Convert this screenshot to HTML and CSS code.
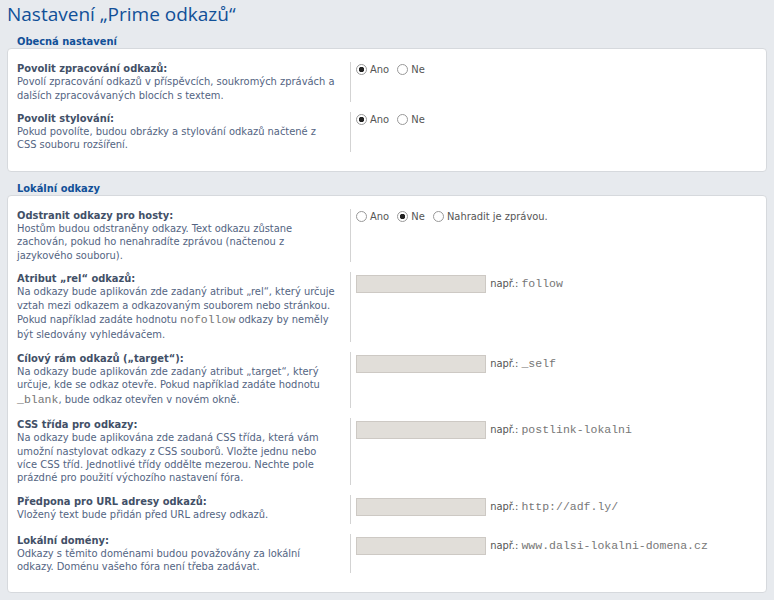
FILE: index.html
```html
<!DOCTYPE html>
<html lang="cs">
<head>
    <meta charset="UTF-8">
    <title>Nastavení „Prime odkazů“</title>
    <link rel="stylesheet" href="styles.css">
</head>
<body>
    <h1>Nastavení „Prime odkazů“</h1>

    <div class="fieldset">
        <div class="legend">Obecná nastavení</div>
        <div class="panel">
            <div class="row">
                <div class="dt">
                    <label>Povolit zpracování odkazů:</label>
                    <span>Povolí zpracování odkazů v příspěvcích, soukromých zprávách a dalších zpracovávaných blocích s textem.</span>
                </div>
                <div class="dd">
                    <label class="radio"><input type="radio" name="enable" checked> Ano</label>
                    <label class="radio"><input type="radio" name="enable"> Ne</label>
                </div>
            </div>
            <div class="row">
                <div class="dt">
                    <label>Povolit stylování:</label>
                    <span>Pokud povolíte, budou obrázky a stylování odkazů načtené z CSS souboru rozšíření.</span>
                </div>
                <div class="dd">
                    <label class="radio"><input type="radio" name="style" checked> Ano</label>
                    <label class="radio"><input type="radio" name="style"> Ne</label>
                </div>
            </div>
        </div>
    </div>

    <div class="fieldset">
        <div class="legend">Lokální odkazy</div>
        <div class="panel">
            <div class="row">
                <div class="dt">
                    <label>Odstranit odkazy pro hosty:</label>
                    <span>Hostům budou odstraněny odkazy. Text odkazu zůstane zachován, pokud ho nenahradíte zprávou (načtenou z jazykového souboru).</span>
                </div>
                <div class="dd">
                    <label class="radio"><input type="radio" name="guests"> Ano</label>
                    <label class="radio"><input type="radio" name="guests" checked> Ne</label>
                    <label class="radio"><input type="radio" name="guests"> Nahradit je zprávou.</label>
                </div>
            </div>
            <div class="row">
                <div class="dt">
                    <label>Atribut „rel“ odkazů:</label>
                    <span>Na odkazy bude aplikován zde zadaný atribut „rel“, který určuje vztah mezi odkazem a odkazovaným souborem nebo stránkou. Pokud například zadáte hodnotu <code>nofollow</code> odkazy by neměly být sledovány vyhledávačem.</span>
                </div>
                <div class="dd">
                    <input type="text" class="text">
                    <span class="hint">např.: <code>follow</code></span>
                </div>
            </div>
            <div class="row">
                <div class="dt">
                    <label>Cílový rám odkazů („target“):</label>
                    <span>Na odkazy bude aplikován zde zadaný atribut „target“, který určuje, kde se odkaz otevře. Pokud například zadáte hodnotu <code>_blank</code>, bude odkaz otevřen v novém okně.</span>
                </div>
                <div class="dd">
                    <input type="text" class="text">
                    <span class="hint">např.: <code>_self</code></span>
                </div>
            </div>
            <div class="row">
                <div class="dt">
                    <label>CSS třída pro odkazy:</label>
                    <span>Na odkazy bude aplikována zde zadaná CSS třída, která vám umožní nastylovat odkazy z CSS souborů. Vložte jednu nebo více CSS tříd. Jednotlivé třídy oddělte mezerou. Nechte pole prázdné pro použití výchozího nastavení fóra.</span>
                </div>
                <div class="dd">
                    <input type="text" class="text">
                    <span class="hint">např.: <code>postlink-lokalni</code></span>
                </div>
            </div>
            <div class="row">
                <div class="dt">
                    <label>Předpona pro URL adresy odkazů:</label>
                    <span>Vložený text bude přidán před URL adresy odkazů.</span>
                </div>
                <div class="dd">
                    <input type="text" class="text">
                    <span class="hint">např.: <code>http://adf.ly/</code></span>
                </div>
            </div>
            <div class="row">
                <div class="dt">
                    <label>Lokální domény:</label>
                    <span>Odkazy s těmito doménami budou považovány za lokální odkazy. Doménu vašeho fóra není třeba zadávat.</span>
                </div>
                <div class="dd">
                    <input type="text" class="text">
                    <span class="hint">např.: <code>www.dalsi-lokalni-domena.cz</code></span>
                </div>
            </div>
        </div>
    </div>
</body>
</html>
```

FILE: styles.css
```css
body {
    margin: 0;
    padding: 0 7px;
    background-color: #e7eaee;
    font-family: "DejaVu Sans Condensed", "DejaVu Sans", sans-serif;
    font-size: 11px;
    color: #536482;
}
h1 {
    margin: 0;
    padding-top: 3px;
    font-family: "Open Sans", sans-serif;
    font-size: 19px;
    line-height: 22px;
    font-weight: normal;
    color: #115098;
}
.fieldset {
    margin-top: 11px;
}
.legend {
    font-weight: bold;
    font-size: 11px;
    line-height: 12px;
    color: #115098;
    padding-left: 10px;
}
.panel {
    background-color: white;
    border: 1px solid #d6d9dd;
    border-radius: 4px;
    padding: 13px 9px 19px;
}
.row {
    display: flex;
    margin-bottom: 10px;
    line-height: 13.3px;
}
.row:last-child {
    margin-bottom: 0;
}
.dt {
    flex: 0 0 45%;
    box-sizing: border-box;
    padding-right: 12px;
}
.dt label {
    display: block;
    font-weight: bold;
    color: #425067;
}
.dt span {
    display: block;
}
.dd {
    flex: 1;
    border-left: 1px solid #d3d3d3;
    padding: 1px 0 8px 5px;
    color: #555;
}
code {
    font-family: "Liberation Mono", monospace;
    font-size: 11.5px;
    line-height: 1;
    color: #777;
}
.dt code {
    display: inline-block;
    padding: 2px 0 3px;
}
.radio {
    display: inline-flex;
    align-items: center;
    margin-right: 5px;
}
.radio input {
    appearance: none;
    width: 11px;
    height: 11px;
    margin: 0 3px 0 0;
    border: 1px solid #999;
    border-radius: 50%;
    background: white;
    box-sizing: border-box;
}
.radio input:checked {
    background: radial-gradient(circle, #222 0, #222 2.5px, white 3px);
}
.text {
    width: 130px;
    height: 18px;
    box-sizing: border-box;
    margin: 2px 0 0;
    padding: 0;
    border: 1px solid #cdc9c4;
    background-color: #e1ded9;
    vertical-align: top;
}
.hint {
    display: inline-block;
    margin-top: 4px;
    margin-left: 1px;
}
```
